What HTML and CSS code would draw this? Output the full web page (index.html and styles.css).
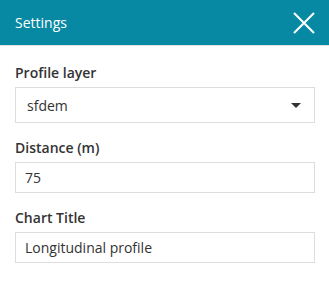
FILE: index.html
```html
<!DOCTYPE html>
<html lang="en">
<head>
    <meta charset="UTF-8">
    <title>Settings</title>
    <link rel="stylesheet" href="styles.css">
</head>
<body>
    <div class="panel">
        <div class="panel-header">
            <span class="panel-title">Settings</span>
            <span class="close">
                <svg width="22" height="22" viewBox="0 0 22 22">
                    <path d="M1 1 L21 21 M21 1 L1 21" stroke="#fff" stroke-width="2" fill="none"/>
                </svg>
            </span>
        </div>
        <div class="panel-body">
            <div class="form-group">
                <label>Profile layer</label>
                <div class="select">
                    <span>sfdem</span>
                    <span class="caret"></span>
                </div>
            </div>
            <div class="form-group">
                <label>Distance (m)</label>
                <input type="text" value="75">
            </div>
            <div class="form-group">
                <label>Chart Title</label>
                <input type="text" value="Longitudinal profile">
            </div>
        </div>
    </div>
</body>
</html>
```

FILE: styles.css
```css
body {
    margin: 0;
    font-family: "Open Sans", "Noto Sans", sans-serif;
    font-size: 14px;
    color: #333;
    background: #fff;
}
.panel-header {
    height: 45px;
    background-color: #0889a3;
    color: #fff;
    display: flex;
    align-items: center;
    justify-content: space-between;
    padding: 0 14px 0 15px;
    border-bottom: 1px solid #e3e3e3;
}
.panel-title {
    font-size: 14px;
}
.close {
    display: flex;
}
.panel-body {
    padding: 17px 14px 0 15px;
}
.form-group {
    margin-bottom: 15px;
}
label {
    display: block;
    font-weight: 600;
    line-height: 19px;
    margin-bottom: 5px;
}
.select {
    height: 36px;
    border: 1px solid #ddd;
    box-sizing: border-box;
    display: flex;
    align-items: center;
    justify-content: space-between;
    padding: 0 13px 0 11px;
}
.caret {
    width: 0;
    height: 0;
    border-left: 5px solid transparent;
    border-right: 5px solid transparent;
    border-top: 5px solid #333;
}
input {
    display: block;
    width: 100%;
    height: 31px;
    box-sizing: border-box;
    border: 1px solid #ddd;
    padding: 0 9px;
    font-family: inherit;
    font-size: 14px;
    color: #333;
    outline: none;
}
```
